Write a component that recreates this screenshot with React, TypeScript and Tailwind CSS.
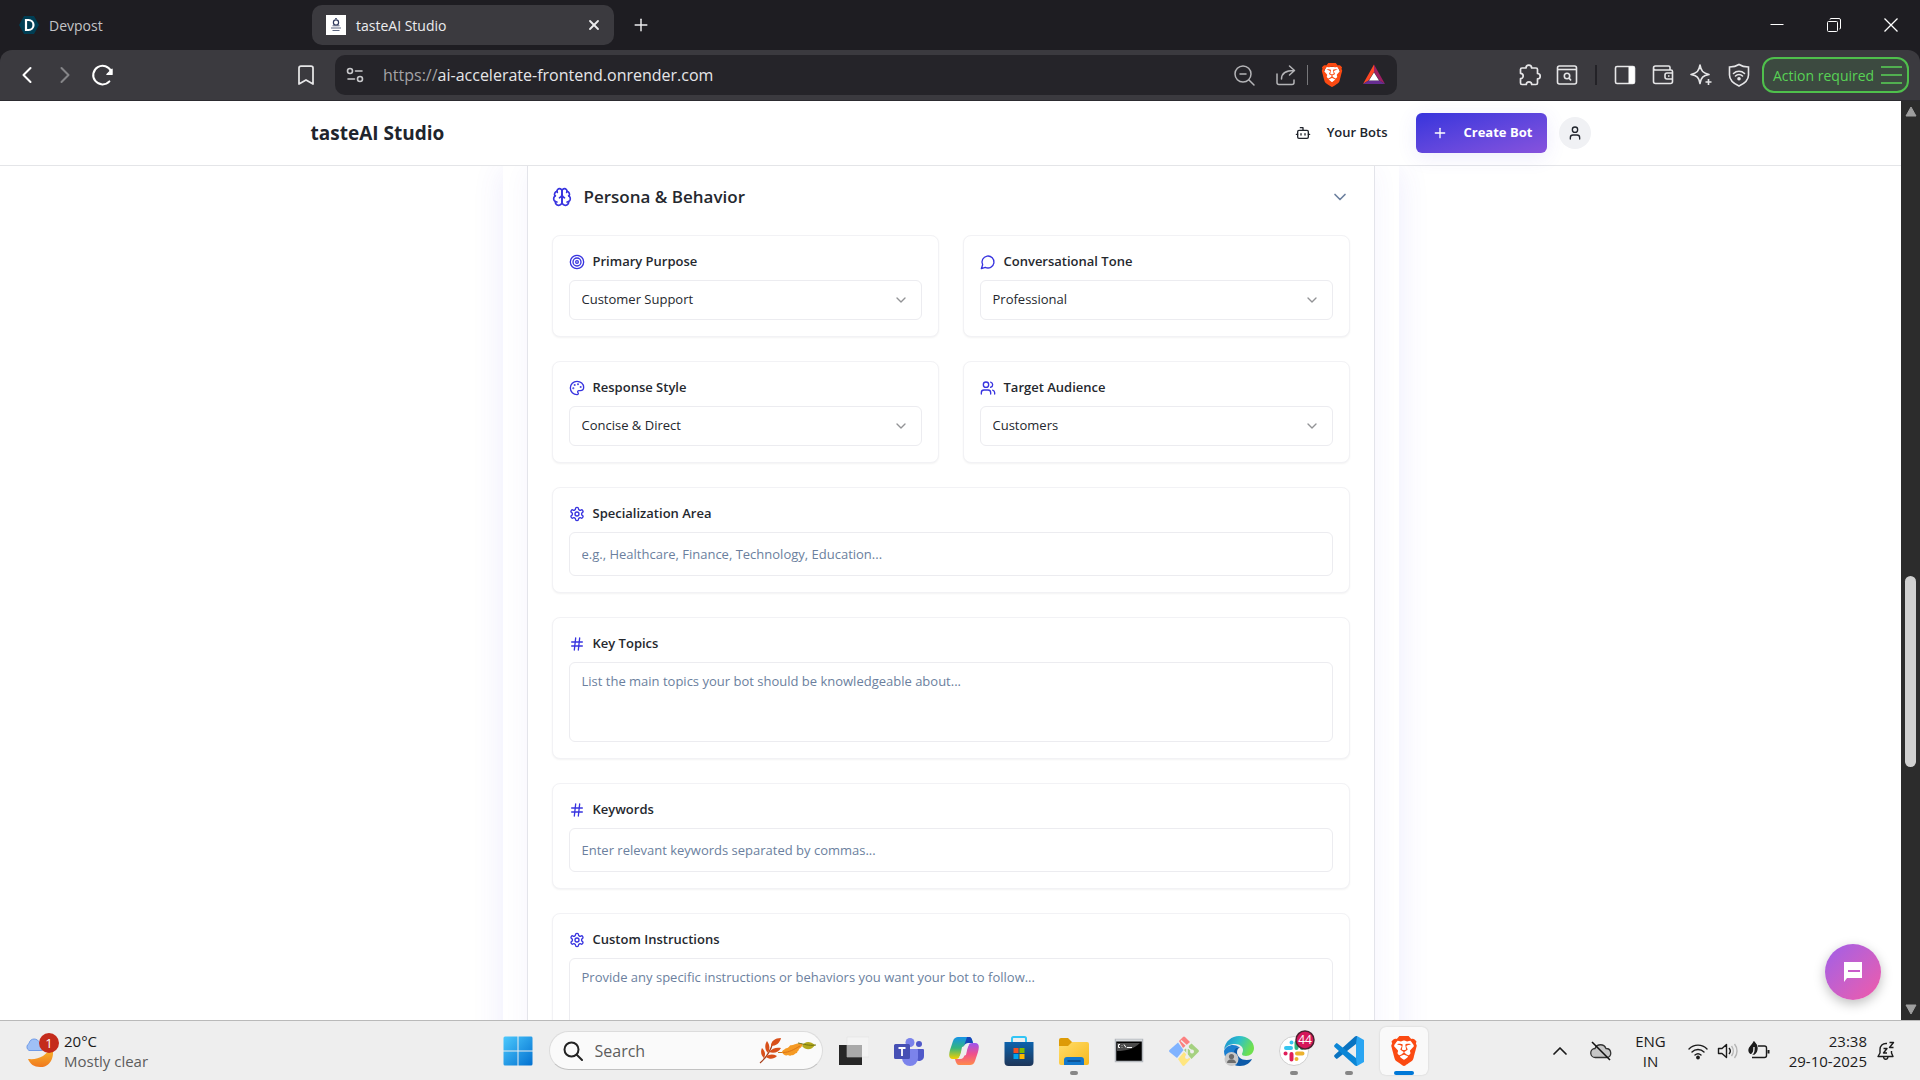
import React from 'react';
import {
  Bookmark,
  Bot,
  ChevronDown,
  ChevronLeft,
  ChevronRight,
  ChevronUp,
  Hash,
  Palette,
  Plus,
  Target,
  User,
  Users,
  X,
} from 'lucide-react';
import { SiBrave } from 'react-icons/si';

interface IconProps {
  className?: string;
}

const SettingsIcon: React.FC<IconProps> = ({ className }) => (
  <svg viewBox="0 0 24 24" fill="none" stroke="currentColor" strokeWidth="2" strokeLinecap="round" strokeLinejoin="round" className={className}>
    <path d="M12.22 2h-.44a2 2 0 0 0-2 2v.18a2 2 0 0 1-1 1.73l-.43.25a2 2 0 0 1-2 0l-.15-.08a2 2 0 0 0-2.73.73l-.22.38a2 2 0 0 0 .73 2.73l.15.1a2 2 0 0 1 1 1.72v.51a2 2 0 0 1-1 1.74l-.15.09a2 2 0 0 0-.73 2.73l.22.38a2 2 0 0 0 2.73.73l.15-.08a2 2 0 0 1 2 0l.43.25a2 2 0 0 1 1 1.73V20a2 2 0 0 0 2 2h.44a2 2 0 0 0 2-2v-.18a2 2 0 0 1 1-1.73l.43-.25a2 2 0 0 1 2 0l.15.08a2 2 0 0 0 2.73-.73l.22-.39a2 2 0 0 0-.73-2.73l-.15-.08a2 2 0 0 1-1-1.74v-.5a2 2 0 0 1 1-1.74l.15-.09a2 2 0 0 0 .73-2.73l-.22-.38a2 2 0 0 0-2.73-.73l-.15.08a2 2 0 0 1-2 0l-.43-.25a2 2 0 0 1-1-1.73V4a2 2 0 0 0-2-2z" />
    <circle cx="12" cy="12" r="3" />
  </svg>
);

const MessageIcon: React.FC<IconProps> = ({ className }) => (
  <svg viewBox="0 0 24 24" fill="none" stroke="currentColor" strokeWidth="2" strokeLinecap="round" strokeLinejoin="round" className={className}>
    <path d="M7.9 20A9 9 0 1 0 4 16.1L2 22Z" />
  </svg>
);

const BrainIcon: React.FC<IconProps> = ({ className }) => (
  <svg viewBox="0 0 24 24" fill="none" stroke="currentColor" strokeWidth="2" strokeLinecap="round" strokeLinejoin="round" className={className}>
    <path d="M12 5a3 3 0 1 0-5.997.125 4 4 0 0 0-2.526 5.77 4 4 0 0 0 .556 6.588A4 4 0 1 0 12 18Z" />
    <path d="M12 5a3 3 0 1 1 5.997.125 4 4 0 0 1 2.526 5.77 4 4 0 0 1-.556 6.588A4 4 0 1 1 12 18Z" />
    <path d="M15 13a4.5 4.5 0 0 1-3-4 4.5 4.5 0 0 1-3 4" />
    <path d="M17.599 6.5a3 3 0 0 0 .399-1.375M6.003 5.125A3 3 0 0 0 6.401 6.5M3.477 10.896a4 4 0 0 1 .585-.396M19.938 10.5a4 4 0 0 1 .585.396M6 18a4 4 0 0 1-1.967-.516M19.967 17.484A4 4 0 0 1 18 18" />
  </svg>
);

/* ---------- browser window ---------- */

const TabBar: React.FC = () => (
  <div className="flex h-[50px] shrink-0 items-center bg-[#1e1d22] text-[14px] text-[#ececee]">
    <div className="flex w-[312px] items-center gap-[10px] pl-[19px] text-[#c3c3c6]">
      <svg viewBox="0 0 20 20" className="h-5 w-5">
        <path d="M5 1h10l5 9-5 9H5l-5-9z" fill="#003e54" />
        <path d="M7 5v10h2.500a5 5 0 0 0 0-10z" fill="none" stroke="#fff" strokeWidth="2.200" />
      </svg>
      <span>Devpost</span>
    </div>
    <div className="flex h-10 w-[302px] items-center gap-[10px] rounded-[10px] bg-[#3b3a3f] pr-[10px] pl-[14px]">
      <svg viewBox="0 0 20 20" className="h-5 w-5">
        <path d="M0 0h20v20H0z" fill="#fff" />
        <circle cx="10" cy="7.500" r="2.600" fill="none" stroke="#2f3a5c" strokeWidth="1.200" />
        <path d="M9 3.500h2M6.500 10.800h7M5 13h10M6.500 15.500h7" stroke="#5d6680" strokeWidth="1.100" />
      </svg>
      <span className="flex-1">tasteAI Studio</span>
      <button aria-label="Close tab" className="flex h-5 w-5 items-center justify-center">
        <X className="h-4 w-4" strokeWidth={2.75} />
      </button>
    </div>
    <button aria-label="New tab" className="ml-[17px]">
      <Plus className="h-5 w-5" strokeWidth={1.75} />
    </button>
    <div className="ml-auto flex items-center gap-[33px] pr-[17px] text-white">
      <button aria-label="Minimize">
        <svg viewBox="0 0 24 24" className="h-6 w-6" fill="none" stroke="currentColor">
          <path d="M5.500 11.500h13" />
        </svg>
      </button>
      <button aria-label="Restore">
        <svg viewBox="0 0 24 24" className="h-6 w-6" fill="none" stroke="currentColor">
          <rect x="5.500" y="8.500" width="10" height="10" rx="1" />
          <path d="M8 6.500a1 1 0 0 1 1-1h8a1.500 1.500 0 0 1 1.500 1.500v8a1 1 0 0 1-1 1" />
        </svg>
      </button>
      <button aria-label="Close">
        <svg viewBox="0 0 24 24" className="h-6 w-6" fill="none" stroke="currentColor" strokeWidth="1.300">
          <path d="m5.500 5.500 13 13m0-13-13 13" />
        </svg>
      </button>
    </div>
  </div>
);

const BraveIcon: React.FC<IconProps> = ({ className }) => (
  <svg viewBox="0 0 24 24" className={className}>
    <path d="M6 4h12l2 5-3 9-5 4-5-4-3-9z" fill="#fff" />
    <SiBrave size={24} color="#fb4a12" />
  </svg>
);

const Toolbar: React.FC = () => (
  <div className="bg-[#1e1d22]">
    <div className="flex h-[51px] shrink-0 items-center rounded-t-xl border-b border-[#2c2b30] bg-[#3b3a3f] text-[#e6e6e8]">
      <div className="flex w-[335px] items-center gap-[10px] pl-[13px]">
        <button aria-label="Back">
          <ChevronLeft className="h-7 w-7 text-white" strokeWidth={1.75} />
        </button>
        <button aria-label="Forward">
          <ChevronRight className="h-7 w-7 text-[#858588]" strokeWidth={1.75} />
        </button>
        <button aria-label="Reload">
          <svg viewBox="0 0 24 24" className="h-7 w-7" fill="none" stroke="#fff" strokeWidth="1.700" strokeLinecap="round">
            <path d="M17.500 17.500a8 8 0 1 1 1.500-8.500" />
            <path d="M19.800 7v4.500h-4.500z" fill="#fff" strokeWidth="1" strokeLinejoin="round" />
          </svg>
        </button>
        <button aria-label="Bookmark" className="mr-[17px] ml-auto">
          <Bookmark className="h-6 w-6" strokeWidth={1.75} />
        </button>
      </div>
      <div className="flex h-10 w-[1062px] items-center rounded-[10px] bg-[#252429]">
        <svg viewBox="0 0 20 20" className="mx-[10px] h-5 w-5" fill="none" stroke="#c9c9cc" strokeWidth="1.600" strokeLinecap="round">
          <circle cx="5" cy="6" r="2.500" />
          <path d="M10.500 6H17M3 14h6.500" />
          <circle cx="15" cy="14" r="2.500" />
        </svg>
        <div className="flex flex-1 pl-[8px] text-[16px]">
          <span className="text-[#a3a3a6]">https://</span>
          <span>ai-accelerate-frontend.onrender.com</span>
        </div>
        <div className="flex items-center gap-[9px] pr-[11px] text-[#b4b4b7]">
          <svg viewBox="0 0 24 24" className="mr-[9px] h-6 w-6" fill="none" stroke="currentColor" strokeWidth="1.500" strokeLinecap="round">
            <circle cx="11" cy="11" r="8" />
            <path d="m17 17 5 5M8 11h6" />
          </svg>
          <svg viewBox="0 0 24 24" className="h-6 w-6" fill="none" stroke="currentColor" strokeWidth="1.500" strokeLinecap="round" strokeLinejoin="round">
            <path d="M3 11v8.500a2 2 0 0 0 2 2h13a2 2 0 0 0 2-2V17" />
            <path d="M7.500 16c0-6 4-8.500 12.500-8.500M15.500 3 20.500 7.500l-5 4.500" />
          </svg>
          <span className="h-5 w-px bg-[#77777a]" />
          <BraveIcon className="ml-[3px] h-6 w-6" />
          <svg viewBox="0 0 24 24" className="ml-[9px] h-6 w-6">
            <path d="M12 1.500 12 9 6.500 17.500 1 21z" fill="#ff4724" />
            <path d="M12 1.500 23 21l-5.500-3.500L12 9z" fill="#9e1f63" />
            <path d="m1 21 5.500-3.500h11L23 21z" fill="#662d91" />
            <path d="m12 9.500 5 8H7z" fill="#fff" />
          </svg>
        </div>
      </div>
      <div className="ml-auto flex items-center gap-[14px] pr-[11px]">
        <svg viewBox="0 0 24 24" className="h-6 w-6" fill="none" stroke="currentColor" strokeWidth="1.700" strokeLinejoin="round">
          <path d="M9 5a2.800 2.800 0 0 1 5.600 0H19a1.500 1.500 0 0 1 1.500 1.500v4a2.700 2.700 0 0 1 0 5.400V20a1.500 1.500 0 0 1-1.500 1.500h-4.300a2.700 2.700 0 0 0-5.400 0H5A1.500 1.500 0 0 1 3.500 20v-4.300a2.700 2.700 0 0 0 0-5.400V6.500A1.500 1.500 0 0 1 5 5z" />
        </svg>
        <svg viewBox="0 0 24 24" className="h-6 w-6" fill="none" stroke="currentColor" strokeWidth="1.600">
          <rect x="2.500" y="3" width="19" height="18" rx="2" />
          <path d="M2.500 6.500h19" />
          <circle cx="12" cy="13" r="2.700" />
          <path d="m14 15 2 2.500" />
        </svg>
        <span className="mx-[2px] h-5 w-[2px] bg-[#232227]" />
        <svg viewBox="0 0 24 24" className="h-6 w-6">
          <rect x="2.500" y="3.500" width="19" height="17" rx="1.500" fill="none" stroke="currentColor" strokeWidth="1.600" />
          <path d="M15.500 3.500H20a1.500 1.500 0 0 1 1.500 1.500v14a1.500 1.500 0 0 1-1.500 1.500h-4.500z" fill="#fff" />
        </svg>
        <svg viewBox="0 0 24 24" className="h-6 w-6" fill="none" stroke="currentColor" strokeWidth="1.600" strokeLinejoin="round">
          <path d="M19 7V4.500A1.500 1.500 0 0 0 17.500 3h-13a2 2 0 0 0 0 4H20a1.500 1.500 0 0 1 1.500 1.500v10A2 2 0 0 1 19.500 20.500h-15a2 2 0 0 1-2-2V5" />
          <path d="M21.500 10H16a2 2 0 0 0-2 2v2a2 2 0 0 0 2 2h5.500M17 13h1.500" />
        </svg>
        <svg viewBox="0 0 24 24" className="h-6 w-6" fill="none" stroke="currentColor" strokeWidth="1.600" strokeLinejoin="round">
          <path d="M11 2c1 6 3 8 9 9.500-6 1-8 3-9 9-1-6-3-8-9-9C8 10 10 8 11 2z" />
          <path d="M19.500 16v6M16.500 19h6" />
        </svg>
        <svg viewBox="0 0 24 24" className="h-6 w-6" fill="none" stroke="currentColor" strokeWidth="1.600" strokeLinecap="round">
          <path d="M12 1.500c3 2 6 2.500 9.500 2.500v8c0 5-4 8.500-9.500 11-5.500-2.500-9.500-6-9.500-11V4C6 4 9 3.500 12 1.500z" />
          <path d="M6.500 10.500a8 8 0 0 1 11 0M8.500 13a5 5 0 0 1 7 0" />
          <circle cx="12" cy="15.800" r="1" fill="currentColor" />
        </svg>
        <button className="-ml-[3px] flex h-9 w-[147px] items-center justify-between rounded-xl border-2 border-[#4fc04c] bg-[#3c4a40] pr-[5px] pl-[9px] text-[14px] whitespace-nowrap text-[#58d255]">
          Action required
          <svg viewBox="0 0 21 18" className="h-[18px] w-[21px]" stroke="currentColor" strokeWidth="1.600">
            <path d="M0 1h21M0 9h21M0 17h21" />
          </svg>
        </button>
      </div>
    </div>
  </div>
);

/* ---------- page ---------- */

const Header: React.FC = () => (
  <header className="z-10 shrink-0 border-b border-[#e4e5e8] bg-white">
    <div className="mx-auto flex h-16 max-w-7xl items-center">
      <h1 className="text-[19px] font-bold text-[#20242c]">tasteAI Studio</h1>
      <div className="ml-auto flex items-center gap-3">
        <a href="#bots" className="flex items-center gap-4 px-4 text-[13px] font-semibold text-[#20242c]">
          <Bot className="h-4 w-4" />
          Your Bots
        </a>
        <button className="flex h-10 w-[131px] items-center gap-4 rounded-md bg-linear-to-br from-[#3733dc] to-[#8752dd] px-4 text-[13px] font-bold whitespace-nowrap text-white shadow-[0_4px_20px_rgba(79,70,229,0.1)]">
          <Plus className="h-4 w-4 shrink-0" />
          Create Bot
        </button>
        <button aria-label="Account" className="flex h-8 w-8 items-center justify-center rounded-full bg-[#f0f1f4] text-[#20242c]">
          <User className="h-4 w-4" />
        </button>
      </div>
    </div>
  </header>
);

interface FieldProps {
  id: string;
  label: string;
  icon: React.ReactNode;
  children: React.ReactNode;
}

const Field: React.FC<FieldProps> = ({ id, label, icon, children }) => (
  <div className="rounded-lg border border-[#f2f2f5] bg-white p-4 shadow-[0_1px_2px_rgba(0,0,0,0.05)]">
    <label htmlFor={id} className="mb-2 flex h-5 items-center gap-2 text-[13px] font-semibold text-[#25282e]">
      <span className="text-[#3834df]">{icon}</span>
      {label}
    </label>
    {children}
  </div>
);

interface SelectFieldProps {
  id: string;
  label: string;
  icon: React.ReactNode;
  options: string[];
}

const SelectField: React.FC<SelectFieldProps> = ({ id, label, icon, options }) => (
  <Field id={id} label={label} icon={icon}>
    <div className="relative">
      <select id={id} className="block h-10 w-full appearance-none rounded-md border border-[#ececf0] bg-white px-3 text-[13px] text-[#25282e]">
        {options.map((option) => (
          <option key={option}>{option}</option>
        ))}
      </select>
      <ChevronDown className="pointer-events-none absolute top-3 right-[13px] h-4 w-4 text-[#929396]" />
    </div>
  </Field>
);

const inputClass = 'block w-full rounded-md border border-[#ececf0] bg-white px-3 text-[13px] leading-5 placeholder:text-[#6b7f9e]';

const PersonaForm: React.FC = () => (
  <div className="mx-auto max-w-4xl bg-white px-6 shadow-[0_4px_30px_rgba(79,70,229,0.1)]">
    <section className="border-x border-[#e3e4ea] bg-white px-6 pb-6 shadow-[0_4px_24px_rgba(79,70,229,0.06)]">
      <button className="flex h-[69px] w-full items-center gap-3 pb-[7px] text-[#25282e]">
        <BrainIcon className="h-5 w-5 text-[#3834df]" />
        <span className="text-[17px] font-semibold">Persona &amp; Behavior</span>
        <ChevronDown className="ml-auto h-5 w-5 text-[#6b7f9e]" />
      </button>
      <div className="grid grid-cols-2 gap-6">
        <SelectField id="purpose" label="Primary Purpose" icon={<Target className="h-4 w-4" />} options={['Customer Support', 'Sales', 'Education']} />
        <SelectField id="tone" label="Conversational Tone" icon={<MessageIcon className="h-4 w-4" />} options={['Professional', 'Friendly', 'Casual']} />
        <SelectField id="style" label="Response Style" icon={<Palette className="h-4 w-4" />} options={['Concise & Direct', 'Detailed']} />
        <SelectField id="audience" label="Target Audience" icon={<Users className="h-4 w-4" />} options={['Customers', 'Employees', 'Students']} />
      </div>
      <div className="mt-6 flex flex-col gap-6">
        <Field id="area" label="Specialization Area" icon={<SettingsIcon className="h-4 w-4" />}>
          <input id="area" className={`${inputClass} h-11`} placeholder="e.g., Healthcare, Finance, Technology, Education..." />
        </Field>
        <Field id="topics" label="Key Topics" icon={<Hash className="h-4 w-4" />}>
          <textarea id="topics" className={`${inputClass} h-20 resize-none py-2`} placeholder="List the main topics your bot should be knowledgeable about..." />
        </Field>
        <Field id="keywords" label="Keywords" icon={<Hash className="h-4 w-4" />}>
          <input id="keywords" className={`${inputClass} h-11`} placeholder="Enter relevant keywords separated by commas..." />
        </Field>
        <Field id="instructions" label="Custom Instructions" icon={<SettingsIcon className="h-4 w-4" />}>
          <textarea id="instructions" className={`${inputClass} h-24 resize-none py-2`} placeholder="Provide any specific instructions or behaviors you want your bot to follow..." />
        </Field>
      </div>
    </section>
  </div>
);

const ScrollBar: React.FC = () => (
  <div className="flex w-[19px] shrink-0 flex-col items-center bg-[#2c2c2c] py-[5px]">
    <svg viewBox="0 0 12 11" className="h-[11px] w-3">
      <path d="M6 1 11 10H1z" fill="#9f9f9f" stroke="#9f9f9f" strokeLinejoin="round" />
    </svg>
    <div className="grow-[459]" />
    <div className="w-[11px] grow-[191] rounded-full bg-[#d0d0d0]" />
    <div className="grow-[237]" />
    <svg viewBox="0 0 12 11" className="h-[11px] w-3">
      <path d="M6 10 1 1h10z" fill="#9f9f9f" stroke="#9f9f9f" strokeLinejoin="round" />
    </svg>
  </div>
);

/* ---------- taskbar ---------- */

interface TaskItemProps {
  label: string;
  open?: boolean;
  active?: boolean;
  children: React.ReactNode;
}

const TaskItem: React.FC<TaskItemProps> = ({ label, open, active, children }) => (
  <button
    aria-label={label}
    className={`relative flex h-12 w-12 items-center justify-center rounded-md ${active ? 'bg-[#f9f9f9] shadow-[0_0_2px_rgba(0,0,0,0.15)]' : ''}`}
  >
    {children}
    {open && <span className="absolute bottom-0 h-1 w-2 rounded-full bg-[#868686]" />}
    {active && <span className="absolute bottom-0 h-1 w-5 rounded-full bg-[#0078d7]" />}
  </button>
);

const Weather: React.FC = () => (
  <div className="flex flex-1 items-center gap-[5px] pl-[25px] text-[15px] leading-5">
    <svg viewBox="0 0 34 36" className="h-9 w-[34px]">
      <defs>
        <linearGradient id="moon" x2="0" y2="1">
          <stop stopColor="#f9c22e" />
          <stop offset="1" stopColor="#f0781e" />
        </linearGradient>
      </defs>
      <path d="M27 13c4 13-4 22-12 21-6 0-10-3-12-8 11 1 18-3 24-13z" fill="url(#moon)" />
      <path d="M4 17.500a4 4 0 0 1 0-7c1-6 9-6 11 0 5 0 5 7 1 7z" fill="#9fc0f5" stroke="#6f9be8" />
      <circle cx="24" cy="10" r="10" fill="#c42b1c" />
      <text x="24" y="15" fill="#fff" fontSize="13" textAnchor="middle">1</text>
    </svg>
    <div>
      <div className="text-[#1b1b1b]">20°C</div>
      <div className="text-[#5c5c5c]">Mostly clear</div>
    </div>
  </div>
);

const Leaves: React.FC = () => (
  <svg viewBox="0 0 58 28" className="h-7 w-[58px]">
    <path d="M1 26C8 20 12 13 14 5" fill="none" stroke="#a8401c" strokeWidth="1.200" />
    <path d="M5 21C1 18 2 13 3 11c3 3 4 6 2 10zM9 16C5 12 6 7 8 4c3 4 3 8 1 12zM12 9c0-5 4-8 10-8-1 5-5 8-10 8zM10 15c3-4 8-5 12-4-2 4-7 6-12 4zM7 20c3-3 7-3 11-1-3 3-7 4-11 1z" fill="#d8501a" />
    <path d="M19 15.500h6" stroke="#c9741a" />
    <path d="M23 15c1-3 3-2 4-4 2 1 3-2 5-3 1 1 3-1 5-1 2-1 5 0 7 0-1 2-2 4-4 5 0 2-2 2-2 4-2 0-3 3-5 2-1 1-3 1-4 0-2 1-5 0-6-3z" fill="#f59a24" />
    <path d="M24 15.500c6 0 11-3 17-6.500" fill="none" stroke="#dc7417" />
    <path d="M43 9c3-5 8-5 13-1-3 5-9 6-13 1z" fill="#b3a81c" />
    <path d="M39 6c6 1 10 3 18 2" fill="none" stroke="#6f7312" />
  </svg>
);

const Taskbar: React.FC = () => (
  <footer className="flex h-[60px] shrink-0 items-center border-t border-[#b9b9b9] bg-[#eee] text-[#1b1b1b]">
    <svg className="absolute h-0 w-0">
      <defs>
        <linearGradient id="win" x2="1" y2="1">
          <stop stopColor="#4cc9fd" />
          <stop offset="1" stopColor="#0270d0" />
        </linearGradient>
        <linearGradient id="copilotA" x2="0" y2="1">
          <stop stopColor="#1593e8" />
          <stop offset="0.5" stopColor="#35b57e" />
          <stop offset="1" stopColor="#f5d000" />
        </linearGradient>
        <linearGradient id="copilotB" x2="0" y2="1">
          <stop stopColor="#9b53f0" />
          <stop offset="0.5" stopColor="#f0508c" />
          <stop offset="1" stopColor="#ff8a4a" />
        </linearGradient>
        <linearGradient id="store" x2="0" y2="1">
          <stop stopColor="#0d63ad" />
          <stop offset="1" stopColor="#1e3558" />
        </linearGradient>
        <linearGradient id="folder" x2="1" y2="1">
          <stop stopColor="#ffdd6b" />
          <stop offset="1" stopColor="#f8b91c" />
        </linearGradient>
        <linearGradient id="edge" x2="1" y2="0.4">
          <stop stopColor="#1a86d0" />
          <stop offset="0.5" stopColor="#2cc0cc" />
          <stop offset="1" stopColor="#6fe04e" />
        </linearGradient>
      </defs>
    </svg>
    <Weather />
    <div className="flex items-center gap-[7px]">
      <TaskItem label="Start">
        <svg viewBox="0 0 30 30" className="h-[30px] w-[30px]" fill="url(#win)">
          <path d="M2 .5h12.500v14H.5V2A1.500 1.500 0 0 1 2 .5zM15.500.5H28A1.500 1.500 0 0 1 29.500 2v12.500h-14zM.5 15.500h14v14H2A1.500 1.500 0 0 1 .5 28zM15.500 15.500h14V28a1.500 1.500 0 0 1-1.500 1.500H15.500z" />
        </svg>
      </TaskItem>
      <div className="flex h-[39px] w-[274px] items-center rounded-full border border-[#dcdcdc] border-b-[#c2c2c2] bg-[#fafafa] pr-[5px] pl-[13px]">
        <svg viewBox="0 0 20 20" className="h-5 w-5" fill="none" stroke="#222" strokeWidth="2" strokeLinecap="round">
          <circle cx="8.500" cy="8.500" r="7" />
          <path d="m14 14 5 5" />
        </svg>
        <input aria-label="Search" placeholder="Search" className="min-w-0 flex-1 bg-transparent pl-3 text-[16px] placeholder:text-[#5d5d5d]" />
        <Leaves />
      </div>
      <TaskItem label="Task view">
        <svg viewBox="0 0 30 30" className="h-[30px] w-[30px]">
          <path d="M0 9h23v20H0z" fill="#262626" />
          <path d="M8 1h22v20H8z" fill="#f3f3f3" stroke="#dcdcdc" strokeWidth="0.500" />
          <path d="M8 9h15v12H8z" fill="#a9a9a9" />
        </svg>
      </TaskItem>
      <TaskItem label="Teams">
        <svg viewBox="0 0 30 30" className="h-[30px] w-[30px]">
          <circle cx="25" cy="8" r="3" fill="#5059c9" />
          <path d="M21 13h8a1 1 0 0 1 1 1v6a5 5 0 0 1-9 3z" fill="#5059c9" />
          <circle cx="16" cy="6.500" r="4.500" fill="#7b83eb" />
          <path d="M9 13h14a1 1 0 0 1 1 1v8a8 8 0 0 1-16 0z" fill="#7b83eb" />
          <path d="M1.500 8h13A1.500 1.500 0 0 1 16 9.500v12a1.500 1.500 0 0 1-1.500 1.500h-13A1.500 1.500 0 0 1 0 21.500v-12A1.500 1.500 0 0 1 1.500 8z" fill="#4650b4" />
          <path d="M4.500 12h7M8 12v8" stroke="#fff" strokeWidth="1.800" />
        </svg>
      </TaskItem>
      <TaskItem label="Copilot">
        <svg viewBox="0 0 30 30" className="h-[30px] w-[30px]">
          <path d="M9 1h11c2 0 3 2 4 6h-5c-3 0-4 2-5 5l-3 8c-1 2-2 3-4 3H4c-5 0-4-5-3-9L4 5c1-3 3-4 5-4z" fill="url(#copilotA)" />
          <path d="M18 1h2c2 0 3 1 4 6h-5c-2 0-3 1-4 3z" fill="#1646b8" />
          <path d="M21 29H10c-2 0-3-2-4-6h5c3 0 4-2 5-5l3-8c1-2 2-3 4-3h3c5 0 4 5 3 9l-3 9c-1 3-3 4-5 4z" fill="url(#copilotB)" />
          <path d="M13 11c-1 4-1 8-3 10l7-2c1-4 1-7 3-10z" fill="#eee" />
        </svg>
      </TaskItem>
      <TaskItem label="Store">
        <svg viewBox="0 0 30 30" className="h-[30px] w-[30px]">
          <path d="M8 6V2.500A1.500 1.500 0 0 1 9.500 1h11A1.500 1.500 0 0 1 22 2.500V6" fill="none" stroke="#32c5f5" strokeWidth="2" />
          <path d="M.5 6h29v20a4 4 0 0 1-4 4h-21a4 4 0 0 1-4-4z" fill="url(#store)" />
          <path d="M9.500 12H14.500v5h-5z" fill="#f25022" />
          <path d="M15.500 12h5v5h-5z" fill="#7fba00" />
          <path d="M9.500 18h5v5h-5z" fill="#00a4ef" />
          <path d="M15.500 18h5v5h-5z" fill="#ffb900" />
        </svg>
      </TaskItem>
      <TaskItem label="File explorer" open>
        <svg viewBox="0 0 30 30" className="h-[30px] w-[30px]">
          <path d="M0 4a2 2 0 0 1 2-2h7l4 4v5H0z" fill="#dd9b06" />
          <path d="M0 10h9l4-4h15a2 2 0 0 1 2 2v19a2 2 0 0 1-2 2H2a2 2 0 0 1-2-2z" fill="url(#folder)" />
          <path d="M5 29v-5a3 3 0 0 1 3-3h14a3 3 0 0 1 3 3v5z" fill="#1277cc" />
          <path d="M9 25h12" stroke="#0a4a86" strokeWidth="1.500" strokeLinecap="round" />
        </svg>
      </TaskItem>
      <TaskItem label="Terminal">
        <svg viewBox="0 0 30 30" className="h-[30px] w-[30px]">
          <rect x="1.500" y="3.500" width="27" height="22" fill="#000" stroke="#b5b9be" strokeWidth="1.500" />
          <path d="M2 4.500h26" stroke="#d5d8dc" strokeWidth="2" />
          <path d="M3 7h23c-6 6-14 8-23 8z" fill="#4a4a4a" />
          <path d="M6 8.500H4.500v3H6M8 9v.5M8 11v.5M10 8.500l2 3M13 11.500h5" stroke="#fff" fill="none" />
        </svg>
      </TaskItem>
      <TaskItem label="Git">
        <svg viewBox="0 0 30 30" className="h-[30px] w-[30px]">
          <path d="m10 5 4-4a1.500 1.500 0 0 1 2 0l5 5-7 6z" fill="#fb8080" />
          <path d="M9 6.500 14.500 14 8 22l-7.500-6a1.500 1.500 0 0 1 0-2z" fill="#80b3ff" />
          <path d="m15 16 6.500 7-6 6.500a1.500 1.500 0 0 1-2 0L9 23z" fill="#ffe680" />
          <path d="m22.500 7.500 7 6.500a1.500 1.500 0 0 1 0 2l-7 7L15 14z" fill="#a5d180" />
          <path d="M12 4.500 18 10v12M18 11l5 4" stroke="#eee" strokeWidth="1.500" fill="none" />
          <circle cx="18" cy="11" r="2" fill="#eee" />
          <circle cx="23" cy="15.500" r="2" fill="#eee" />
          <circle cx="18" cy="21" r="2" fill="#eee" />
        </svg>
      </TaskItem>
      <TaskItem label="Edge">
        <svg viewBox="0 0 30 30" className="h-[30px] w-[30px]">
          <path d="M1 13c0 10 6 17 15 17 6 0 10-3 12-7-8 3-15-1-15-7 0-3 2-4 3-5z" fill="#0d5aa8" />
          <path d="M0 14C1 5 8 0 15 0c9 0 15 6 15 12 0 5-4 8-8 8-3 0-4-1-4-2s1-2 1-4c0-3-3-6-8-6C6 8 2 10 0 14z" fill="url(#edge)" />
          <path d="M0 15c2-6 10-8 15-4-6 1-8 10-2 18C5 28 0 22 0 15z" fill="#1c7fd0" />
          <circle cx="7.500" cy="23" r="7" fill="#c9c9c9" />
          <circle cx="7.500" cy="20.500" r="2.600" fill="#6c6c6c" />
          <path d="M3 27c0-5 9-5 9 0" fill="#6c6c6c" />
        </svg>
      </TaskItem>
      <TaskItem label="Slack" open>
        <svg viewBox="0 0 36 36" className="h-9 w-9" overflow="visible">
          <circle cx="18" cy="18" r="14.500" fill="#fff" stroke="#d0d0d0" />
          <g strokeWidth="4" strokeLinecap="round">
            <path d="M10 15h5M15.500 9.500v.1" stroke="#36c5f0" />
            <path d="M20.500 9.500v5.500M26 15h.1" stroke="#2eb67d" />
            <path d="M21 20.500h5.500M20.500 26v.1" stroke="#ecb22e" />
            <path d="M15.500 21v5.500M9.500 20.500h.1" stroke="#e01e5a" />
          </g>
          <circle cx="29" cy="7" r="9" fill="#d6175a" stroke="#4c2030" strokeWidth="1.500" />
          <text x="29" y="11" fill="#fff" fontSize="12" textAnchor="middle">44</text>
        </svg>
      </TaskItem>
      <TaskItem label="Visual Studio Code" open>
        <svg viewBox="0 0 30 30" className="h-[30px] w-[30px]">
          <path d="M30 4v22l-7 4-1-1V1l1-1z" fill="#2aa5f2" />
          <path d="M22 8 3.500 22.500a1 1 0 0 1-1.500 0L.5 21c-.5-.5-.5-1.500 0-2L21 .5c1-.7 2-.5 2-.5z" fill="#0a73c0" />
          <path d="M22 22 3.500 7.500a1 1 0 0 0-1.500 0L.5 9c-.5.5-.5 1.500 0 2L21 29.500c1 .7 2 .5 2 .5z" fill="#0b86d6" />
        </svg>
      </TaskItem>
      <TaskItem label="Brave" active>
        <BraveIcon className="h-[30px] w-[30px]" />
      </TaskItem>
    </div>
    <div className="flex flex-1 items-center justify-end pr-[24px] text-[15px] leading-5">
      <ChevronUp className="mr-[18px] h-6 w-6" strokeWidth={1.75} />
      <svg viewBox="0 0 22 20" className="mr-[23px] h-5 w-[22px]" fill="#c6c6c6" stroke="#333" strokeWidth="1.300">
        <path d="M5.500 16.500a4.500 4.500 0 0 1-.5-9c2-5 9-5 11 0 6 0 6.500 9 .5 9z" />
        <path d="m2 1 18 18" stroke="#111" strokeWidth="1.600" />
      </svg>
      <div className="mr-[22px] text-center">
        <div>ENG</div>
        <div>IN</div>
      </div>
      <svg viewBox="0 0 20 20" className="mr-[9px] h-5 w-5" fill="none" stroke="#1b1b1b" strokeWidth="1.400" strokeLinecap="round">
        <path d="M1 8a12.500 12.500 0 0 1 18 0M4 11a8.500 8.500 0 0 1 12 0M7 14a4.500 4.500 0 0 1 6 0" />
        <circle cx="10" cy="16.500" r="1.200" fill="#1b1b1b" />
      </svg>
      <svg viewBox="0 0 22 20" className="mr-[9px] h-5 w-[22px]" fill="none" stroke="#1b1b1b" strokeWidth="1.400" strokeLinejoin="round">
        <path d="M1.500 7.500H5l4.500-4v13L5 12.500H1.500z" />
        <path d="M12 7a4.500 4.500 0 0 1 0 6" />
        <path d="M14.500 5a8 8 0 0 1 0 10M17.500 3a11 11 0 0 1 0 14" stroke="#b5b5b5" />
      </svg>
      <svg viewBox="0 0 22 20" className="mr-[19px] h-5 w-[22px]" fill="none" stroke="#1b1b1b" strokeWidth="1.400">
        <path d="M10 5h6.500a2 2 0 0 1 2 2v7.500a2 2 0 0 1-2 2H4" />
        <path d="M20.500 9v3.500" strokeWidth="2" />
        <path d="M6 1c3 3 3 5 3 6 0 3-1 5-3 6-3 0-5-1-5-4s3-4 5-8z" fill="#1b1b1b" />
        <path d="M6 6c0 4 0 6-3 8" stroke="#eee" />
      </svg>
      <div className="text-right">
        <div>23:38</div>
        <div>29-10-2025</div>
      </div>
      <svg viewBox="0 0 20 20" className="ml-[9px] h-5 w-5" fill="none" stroke="#1b1b1b" strokeWidth="1.400" strokeLinejoin="round">
        <path d="M11 2.500C6.500 2 4 5 4 8.500V12l-2 3.500h15L15.500 12v-2M7.500 16c.5 3 4 3 4.500 0" />
        <path d="M7.500 7.500h3.500l-3.500 4.500H11M13.500 1.500h4L13.500 6.500h4" />
      </svg>
    </div>
  </footer>
);

const App: React.FC = () => {
  return (
    <div className="flex h-screen flex-col overflow-hidden bg-white font-['Open_Sans','Noto_Sans',sans-serif]">
      <TabBar />
      <Toolbar />
      <div className="flex min-h-0 flex-1">
        <div className="relative flex min-w-0 flex-1 flex-col overflow-hidden">
          <Header />
          <main className="min-h-0 flex-1 overflow-hidden">
            <PersonaForm />
          </main>
          <button
            aria-label="Open chat"
            className="absolute right-5 bottom-5 flex h-14 w-14 items-center justify-center rounded-full bg-linear-to-br from-[#9f5de8] to-[#f158a8] shadow-[0_4px_12px_rgba(0,0,0,0.25)]"
          >
            <svg viewBox="0 0 20 20" className="h-5 w-5">
              <path d="M1 0h18v16H4l-3 4z" fill="#fff" />
              <path d="M5 9h12" stroke="#c95bca" strokeWidth="2" />
            </svg>
          </button>
        </div>
        <ScrollBar />
      </div>
      <Taskbar />
    </div>
  );
};

export default App;
